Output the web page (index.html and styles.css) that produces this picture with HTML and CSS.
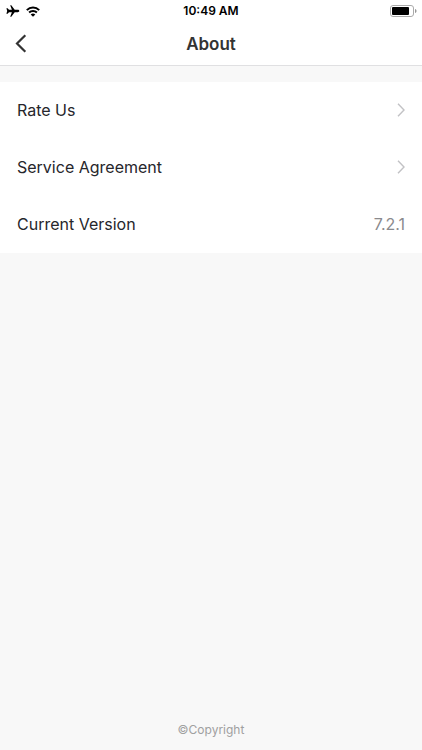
FILE: index.html
```html
<!DOCTYPE html>
<html lang="en">
<head>
<meta charset="utf-8">
<meta name="viewport" content="width=device-width, initial-scale=1">
<title>About</title>
<link rel="stylesheet" href="styles.css">
</head>
<body>
<div class="screen">
  <div class="status">
    <div class="status-left">
      <svg width="14" height="12" viewBox="0 0 14 12" aria-hidden="true"><path d="M13.300 6c0-.7-.7-1.200-1.500-1.200H8.700L5.300.3H4.200l1.700 4.500H3L1.600 3.300H.4L1.200 6 .4 8.700h1.200L3 7.200h2.900l-1.700 4.500h1.100l3.400-4.500h3.100c.8 0 1.500-.5 1.500-1.200z"/></svg>
      <svg width="14" height="11" viewBox="0 0 14 11" aria-hidden="true"><g fill="none" stroke="#000" stroke-width="2"><path d="M.8 4.100a8.800 8.800 0 0 1 12.400 0"/><path d="M3.100 6.500a5.500 5.500 0 0 1 7.800 0"/></g><path d="M7 10.800 4.700 8.500a3.300 3.300 0 0 1 4.600 0z"/></svg>
    </div>
    <time class="clock">10:49 AM</time>
    <div class="status-right">
      <svg width="27" height="12" viewBox="0 0 27 12" aria-hidden="true"><rect x=".5" y=".5" width="23" height="11" rx="2.500" fill="none" stroke="#aaa"/><rect x="2" y="2" width="17" height="8" rx="1"/><path d="M25 4c2 .6 2 3.400 0 4z" fill="#999"/></svg>
    </div>
  </div>
  <header class="navbar">
    <button class="back" type="button" aria-label="Back"><svg width="12" height="20" viewBox="0 0 12 20" aria-hidden="true"><path d="M10.300 1.200 2 9.500l8.300 8.300" fill="none" stroke="#333" stroke-width="2.200"/></svg></button>
    <h1 class="title">About</h1>
  </header>
  <main class="content">
    <nav class="list">
      <a class="row" href="#rate">Rate Us<svg width="9" height="14" viewBox="0 0 9 14" aria-hidden="true"><path d="m2 .7 6 6.300-6 6.300" fill="none" stroke="#c2c2c5" stroke-width="1.400"/></svg></a>
      <a class="row" href="#agreement">Service Agreement<svg width="9" height="14" viewBox="0 0 9 14" aria-hidden="true"><path d="m2 .7 6 6.300-6 6.300" fill="none" stroke="#c2c2c5" stroke-width="1.400"/></svg></a>
      <div class="row">Current Version<span class="version">7.2.1</span></div>
    </nav>
  </main>
  <footer class="footer">©Copyright</footer>
</div>
</body>
</html>
```
FILE: styles.css
```css
* { box-sizing: border-box; }
body { margin: 0; background: #f8f8f8; color: #26262b; font-family: Inter, sans-serif; }
.screen { display: flex; flex-direction: column; min-height: 100vh; }
.status { display: grid; grid-template-columns: 1fr auto 1fr; align-items: center; height: 22px; padding: 0 5px; background: #fff; color: #000; }
.status svg { display: block; }
.status-left { display: flex; align-items: center; gap: 6px; }
.status-right { display: flex; justify-content: flex-end; }
.clock { font-size: 12px; font-weight: 600; line-height: 22px; }
.status-left { padding-left: 1px; }
.navbar { display: grid; grid-template-columns: 44px 1fr 44px; align-items: center; height: 44px; background: #fff; border-bottom: 1px solid #e0e0e2; }
.back { display: flex; align-items: center; height: 43px; padding: 0 0 0 15px; border: 0; background: none; }
.title { margin: 0; font-size: 17px; font-weight: 600; line-height: 24px; text-align: center; color: #333; }
.content { flex: 1; padding-top: 16px; }
.list { background: #fff; }
.row { display: flex; align-items: center; justify-content: space-between; padding: 16px 17px 17px; font-size: 16px; line-height: 24px; color: inherit; text-decoration: none; }
.version { color: #8a8a8d; }
.footer { padding: 12px 0; font-size: 12px; line-height: 16px; text-align: center; color: #a0a0a0; }
```
